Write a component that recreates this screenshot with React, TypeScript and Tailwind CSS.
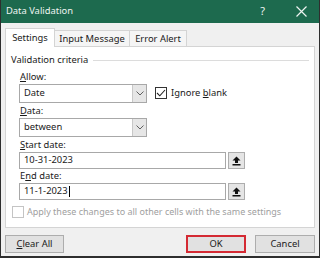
import React from "react";

const font = { fontFamily: '"Noto Sans", "Open Sans", sans-serif' };

function Chevron() {
  return (
    <svg width="8" height="5" viewBox="0 0 8 5">
      <path d="M0.5 0.5 L4 4 L7.5 0.5" fill="none" stroke="#606060" strokeWidth="1" />
    </svg>
  );
}

function Select({ value }: { value: string }) {
  return (
    <div className="flex h-[19px] w-[128px] border border-[#a8a8a8] bg-white">
      <div className="flex flex-1 items-center pl-[4px] text-[9.4px] text-[#1a1a1a]">{value}</div>
      <div className="flex w-[14px] items-center justify-center border-l border-[#c8c8c8] bg-[#e6e6e6]">
        <Chevron />
      </div>
    </div>
  );
}

function Collapse() {
  return (
    <div className="flex h-[17px] w-[17px] items-center justify-center border border-[#adadad] bg-[#e5e5e5]">
      <svg width="9" height="10" viewBox="0 0 9 10">
        <path d="M4.5 0.5 L8.5 4.5 L6 4.5 L6 7 L3 7 L3 4.5 L0.5 4.5 Z" fill="#111" />
        <rect x="0.5" y="8" width="8" height="1.5" fill="#111" />
      </svg>
    </div>
  );
}

function DateInput({ value, caret }: { value: string; caret?: boolean }) {
  return (
    <div className="flex items-center gap-[2px]">
      <div className="flex h-[17px] w-[207px] items-center border border-[#a8a8a8] bg-white pl-[4px] text-[9.4px] text-[#1a1a1a]">
        {value}
        {caret && <span className="ml-[1px] inline-block h-[11px] w-[1px] bg-black" />}
      </div>
      <Collapse />
    </div>
  );
}

function Label({ pre, u, post }: { pre?: string; u: string; post: string }) {
  return (
    <div className="flex h-[13px] items-center pl-[1px] text-[9.4px] text-[#1a1a1a]">
      {pre}
      <span className="underline underline-offset-[1px]">{u}</span>
      {post}
    </div>
  );
}

export default function App() {
  return (
    <div
      className="flex h-[258px] w-[320px] flex-col border-x border-b-2 border-[#2e2e2e] bg-[#f0f0f0]"
      style={font}
    >
      <div className="flex h-[23px] shrink-0 items-center bg-[#1d6a4e] pl-[5px] pr-[12px] text-[9.4px] text-[#eef4f1]">
        <span className="flex-1">Data Validation</span>
        <span className="mr-[31px] text-[11px]">?</span>
        <svg width="11" height="11" viewBox="0 0 11 11">
          <path d="M0.5 0.5 L10.5 10.5 M10.5 0.5 L0.5 10.5" stroke="#eef4f1" strokeWidth="1.2" />
        </svg>
      </div>

      <div className="mt-[5px] flex h-[19px] items-end pl-[4px] text-[9.4px] text-[#1a1a1a]">
        <div className="relative z-10 flex h-[19px] w-[50px] items-center justify-center border-x border-t border-[#d4d4d4] bg-white">
          Settings
        </div>
        <div className="flex h-[17px] w-[75px] items-center justify-center border-r border-t border-[#d4d4d4] bg-[#f5f5f5]">
          Input Message
        </div>
        <div className="flex h-[17px] w-[57px] items-center justify-center border-r border-t border-[#d4d4d4] bg-[#f5f5f5]">
          Error Alert
        </div>
      </div>

      <div className="-mt-[1px] ml-[4px] flex h-[182px] w-[310px] flex-col border border-[#d4d4d4] bg-white">
        <div className="mt-[6px] flex h-[14px] items-center pl-[5px] pr-[5px] text-[9.4px] text-[#1a1a1a]">
          <span>Validation criteria</span>
          <div className="ml-[5px] h-[1px] flex-1 bg-[#dcdcdc]" />
        </div>

        <div className="ml-[13px] mt-[4px] flex flex-col">
          <Label u="A" post="llow:" />
          <div className="flex items-center">
            <Select value="Date" />
            <div className="ml-[8px] flex items-center text-[9.4px] text-[#1a1a1a]">
              <div className="flex h-[12px] w-[12px] items-center justify-center border border-[#333]">
                <svg width="10" height="8" viewBox="0 0 10 8">
                  <path d="M1 4 L3.8 6.8 L9 1" fill="none" stroke="#222" strokeWidth="1.1" />
                </svg>
              </div>
              <span className="ml-[4px]">
                Ignore <span className="underline underline-offset-[1px]">b</span>lank
              </span>
            </div>
          </div>

          <div className="mt-[2px]">
            <Label u="D" post="ata:" />
          </div>
          <Select value="between" />

          <div className="mt-[2px]">
            <Label u="S" post="tart date:" />
          </div>
          <DateInput value="10-31-2023" />

          <div className="mt-[1px]">
            <Label pre="E" u="n" post="d date:" />
          </div>
          <DateInput value="11-1-2023" caret />
        </div>

        <div className="ml-[6px] mt-[5px] flex h-[14px] items-center text-[9px] text-[#a0a0a0]">
          <div className="h-[12px] w-[12px] border border-[#c4c4c4] bg-white" />
          <span className="ml-[3px]">Apply these changes to all other cells with the same settings</span>
        </div>
      </div>

      <div className="mt-[7px] flex items-center px-[4px] text-[9.4px] text-[#1a1a1a]">
        <button className="flex h-[18px] w-[59px] items-center justify-center border border-[#adadad] bg-[#e1e1e1]">
          <span className="underline underline-offset-[1px]">C</span>lear All
        </button>
        <div className="flex-1" />
        <button className="flex h-[18px] w-[60px] items-center justify-center border-2 border-[#d42a33] bg-[#e1e1e1]">
          OK
        </button>
        <button className="ml-[9px] flex h-[18px] w-[60px] items-center justify-center border border-[#adadad] bg-[#e1e1e1]">
          Cancel
        </button>
      </div>
    </div>
  );
}
